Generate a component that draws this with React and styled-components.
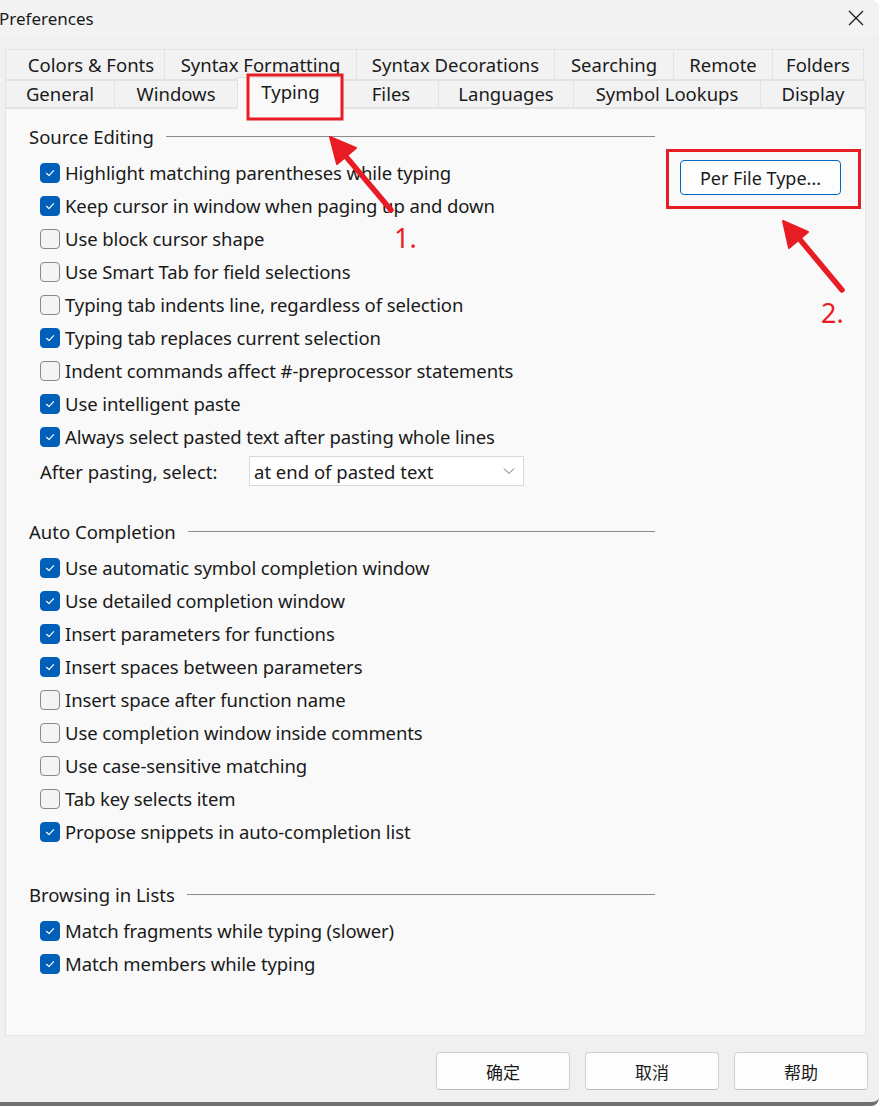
import React from 'react';
import styled, { createGlobalStyle } from 'styled-components';

const GlobalStyle = createGlobalStyle`
  html, body {
    margin: 0;
    padding: 0;
    background: #ffffff;
  }
  body {
    font-family: "Noto Sans", "Noto Sans CJK SC", sans-serif;
    color: #1a1a1a;
  }
`;

// Dialog shell
const Window = styled.div`
  position: relative;
  width: 879px;
  height: 1106px;
  box-sizing: border-box;
  background: #f0f0f0;
  border-bottom: 4px solid #6f6f6f;
  border-radius: 0 8px 8px 0;
  overflow: hidden;
  display: flex;
  flex-direction: column;
`;

const TitleBar = styled.div`
  height: 36px;
  display: flex;
  align-items: center;
  justify-content: space-between;
  background: #f3f3f3;
  padding-right: 14px;
`;

const Title = styled.span`
  margin-left: -1px;
  font-size: 17px;
  color: #1a1a1a;
`;

const CloseBtn = styled.div`
  width: 18px;
  height: 18px;
  display: flex;
  align-items: center;
  justify-content: center;
`;

const TabArea = styled.div`
  margin-top: 13px;
  padding-left: 5px;
  display: flex;
  flex-direction: column;
`;

const TabRow = styled.div`
  display: flex;
  height: ${p => p.$h}px;
  align-items: flex-end;
`;

const Tab = styled.div`
  box-sizing: border-box;
  width: ${p => p.$w}px;
  height: ${p => (p.$active ? p.$h + 4 : p.$h)}px;
  margin-bottom: ${p => (p.$active ? -1 : 0)}px;
  position: relative;
  z-index: ${p => (p.$active ? 2 : 1)};
  display: flex;
  align-items: center;
  justify-content: center;
  padding-bottom: ${p => (p.$active ? 4 : 1)}px;
  padding-left: ${p => p.$pl || 0}px;
  font-size: 18.5px;
  color: #1a1a1a;
  background: ${p => (p.$active ? '#f9f9f9' : '#f2f2f2')};
  border: 1px solid #e3e3e3;
  border-bottom: ${p => (p.$active ? 'none' : '1px solid #e3e3e3')};
  margin-right: -1px;
`;

const Panel = styled.div`
  box-sizing: border-box;
  margin-left: 5px;
  width: 861px;
  height: 928px;
  background: #f9f9f9;
  border: 1px solid #e5e5e5;
  padding: 11px 0 0 23px;
  display: flex;
`;

const LeftColumn = styled.div`
  width: 626px;
  display: flex;
  flex-direction: column;
`;

const RightColumn = styled.div`
  padding: 40px 0 0 25px;
`;

const Section = styled.div`
  margin-top: ${p => p.$gap || 0}px;
`;

const SectionHeader = styled.div`
  height: 33px;
  margin-bottom: 3px;
  display: flex;
  align-items: center;
  font-size: 18.5px;
  color: #1a1a1a;

  &::after {
    content: '';
    flex: 1;
    height: 1px;
    margin-left: 12px;
    background: #8c8c8c;
  }
`;

const Row = styled.label`
  height: 33px;
  display: flex;
  align-items: center;
  padding-left: 11px;
  font-size: 18.5px;
  letter-spacing: -0.1px;
  color: #1a1a1a;
`;

const Box = styled.span`
  box-sizing: border-box;
  width: 20px;
  height: 20px;
  margin-right: 5px;
  border-radius: 4px;
  display: flex;
  align-items: center;
  justify-content: center;
  flex-shrink: 0;
  background: ${p => (p.$on ? '#005fb8' : '#f4f4f4')};
  border: 1px solid ${p => (p.$on ? '#005fb8' : '#8a8a8a')};
`;

const SelectRow = styled.div`
  height: 36px;
  display: flex;
  align-items: center;
  padding-left: 11px;
  font-size: 18.5px;
`;

const SelectLabel = styled.span`
  width: 209px;
`;

const SelectBox = styled.div`
  box-sizing: border-box;
  width: 275px;
  height: 30px;
  background: #ffffff;
  border: 1px solid #d9d9d9;
  display: flex;
  align-items: center;
  justify-content: space-between;
  padding: 0 8px 0 4px;
  font-size: 18.5px;
`;

const PerFileButton = styled.div`
  box-sizing: border-box;
  width: 161px;
  height: 35px;
  background: #fdfdfd;
  border: 1px solid #0067c0;
  border-radius: 4px;
  display: flex;
  align-items: center;
  justify-content: center;
  font-size: 18px;
  color: #1a1a1a;
`;

const Footer = styled.div`
  display: flex;
  justify-content: flex-end;
  gap: 15px;
  padding: 16px 11px 0 0;
`;

const FooterButton = styled.div`
  box-sizing: border-box;
  width: 134px;
  height: 38px;
  background: #fdfdfd;
  border: 1px solid #d0d0d0;
  border-bottom-color: #bcbcbc;
  border-radius: 4px;
  display: flex;
  align-items: center;
  justify-content: center;
  font-family: "Noto Sans CJK SC", sans-serif;
  font-size: 17px;
  color: #1a1a1a;
`;

// red annotations drawn over the dialog
const Overlay = styled.svg`
  position: absolute;
  left: 0;
  top: 0;
  width: 879px;
  height: 1106px;
  pointer-events: none;
  z-index: 10;
`;

const topTabs = [
  { label: 'Colors & Fonts', w: 160, pl: 12 },
  { label: 'Syntax Formatting', w: 193 },
  { label: 'Syntax Decorations', w: 199 },
  { label: 'Searching', w: 120 },
  { label: 'Remote', w: 100 },
  { label: 'Folders', w: 92 },
];

const bottomTabs = [
  { label: 'General', w: 110 },
  { label: 'Windows', w: 124 },
  { label: 'Typing', w: 107, active: true },
  { label: 'Files', w: 96, pl: 0 },
  { label: 'Languages', w: 136 },
  { label: 'Symbol Lookups', w: 188 },
  { label: 'Display', w: 106 },
];

const sourceEditing = [
  ['Highlight matching parentheses while typing', true],
  ['Keep cursor in window when paging up and down', true],
  ['Use block cursor shape', false],
  ['Use Smart Tab for field selections', false],
  ['Typing tab indents line, regardless of selection', false],
  ['Typing tab replaces current selection', true],
  ['Indent commands affect #-preprocessor statements', false],
  ['Use intelligent paste', true],
  ['Always select pasted text after pasting whole lines', true],
];

const autoCompletion = [
  ['Use automatic symbol completion window', true],
  ['Use detailed completion window', true],
  ['Insert parameters for functions', true],
  ['Insert spaces between parameters', true],
  ['Insert space after function name', false],
  ['Use completion window inside comments', false],
  ['Use case-sensitive matching', false],
  ['Tab key selects item', false],
  ['Propose snippets in auto-completion list', true],
];

const browsing = [
  ['Match fragments while typing (slower)', true],
  ['Match members while typing', true],
];

const Check = ({ on }) => (
  <Box $on={on}>
    {on && (
      <svg width="12" height="12" viewBox="0 0 12 12">
        <polyline points="2.5,6.3 5,8.6 9.6,3.6" fill="none" stroke="#fff" strokeWidth="1.2" strokeLinecap="round" strokeLinejoin="round" />
      </svg>
    )}
  </Box>
);

const Options = ({ items }) =>
  items.map(([text, on]) => (
    <Row key={text}>
      <Check on={on} />
      {text}
    </Row>
  ));

const Annotations = () => (
  <Overlay viewBox="0 0 879 1106">
    <g fill="none" stroke="#e81c24" strokeWidth="3">
      <rect x="248" y="75" width="94" height="44" />
      <rect x="667.5" y="150.5" width="192" height="57" />
    </g>
    <g stroke="#e81c24" strokeWidth="5.5" strokeLinecap="round" fill="#e81c24">
      <line x1="391" y1="210" x2="343" y2="153" />
      <line x1="842" y1="290" x2="797" y2="236" />
    </g>
    <g fill="#e81c24" stroke="#e81c24" strokeWidth="2" strokeLinejoin="round">
      <polygon points="330,137 337,164 356,148" />
      <polygon points="783,221 789,248 808,232" />
    </g>
    <g fill="#e81c24" fontFamily="Noto Sans, sans-serif" fontSize="27">
      <text x="394" y="248">1.</text>
      <text x="821" y="323">2.</text>
    </g>
  </Overlay>
);

const App = () => {
  return (
    <>
      <GlobalStyle />
      <Window>
        <TitleBar>
          <Title>Preferences</Title>
          <CloseBtn>
            <svg width="16" height="16" viewBox="0 0 16 16">
              <path d="M1 1 L15 15 M15 1 L1 15" stroke="#1a1a1a" strokeWidth="1.3" />
            </svg>
          </CloseBtn>
        </TitleBar>

        <TabArea>
          <TabRow $h={31}>
            {topTabs.map(t => (
              <Tab key={t.label} $w={t.w} $h={31} $pl={t.pl}>{t.label}</Tab>
            ))}
          </TabRow>
          <TabRow $h={28}>
            {bottomTabs.map(t => (
              <Tab key={t.label} $w={t.w} $h={28} $active={t.active}>{t.label}</Tab>
            ))}
          </TabRow>
        </TabArea>

        <Panel>
          <LeftColumn>
            <Section>
              <SectionHeader>Source Editing</SectionHeader>
              <Options items={sourceEditing} />
              <SelectRow>
                <SelectLabel>After pasting, select:</SelectLabel>
                <SelectBox>
                  <span>at end of pasted text</span>
                  <svg width="12" height="8" viewBox="0 0 12 8">
                    <polyline points="1,1.5 6,6.5 11,1.5" fill="none" stroke="#6a6a6a" strokeWidth="1" />
                  </svg>
                </SelectBox>
              </SelectRow>
            </Section>

            <Section $gap={26}>
              <SectionHeader>Auto Completion</SectionHeader>
              <Options items={autoCompletion} />
            </Section>

            <Section $gap={30}>
              <SectionHeader>Browsing in Lists</SectionHeader>
              <Options items={browsing} />
            </Section>
          </LeftColumn>

          <RightColumn>
            <PerFileButton>Per File Type...</PerFileButton>
          </RightColumn>
        </Panel>

        <Footer>
          <FooterButton>确定</FooterButton>
          <FooterButton>取消</FooterButton>
          <FooterButton>帮助</FooterButton>
        </Footer>

        <Annotations />
      </Window>
    </>
  );
};

export default App;
